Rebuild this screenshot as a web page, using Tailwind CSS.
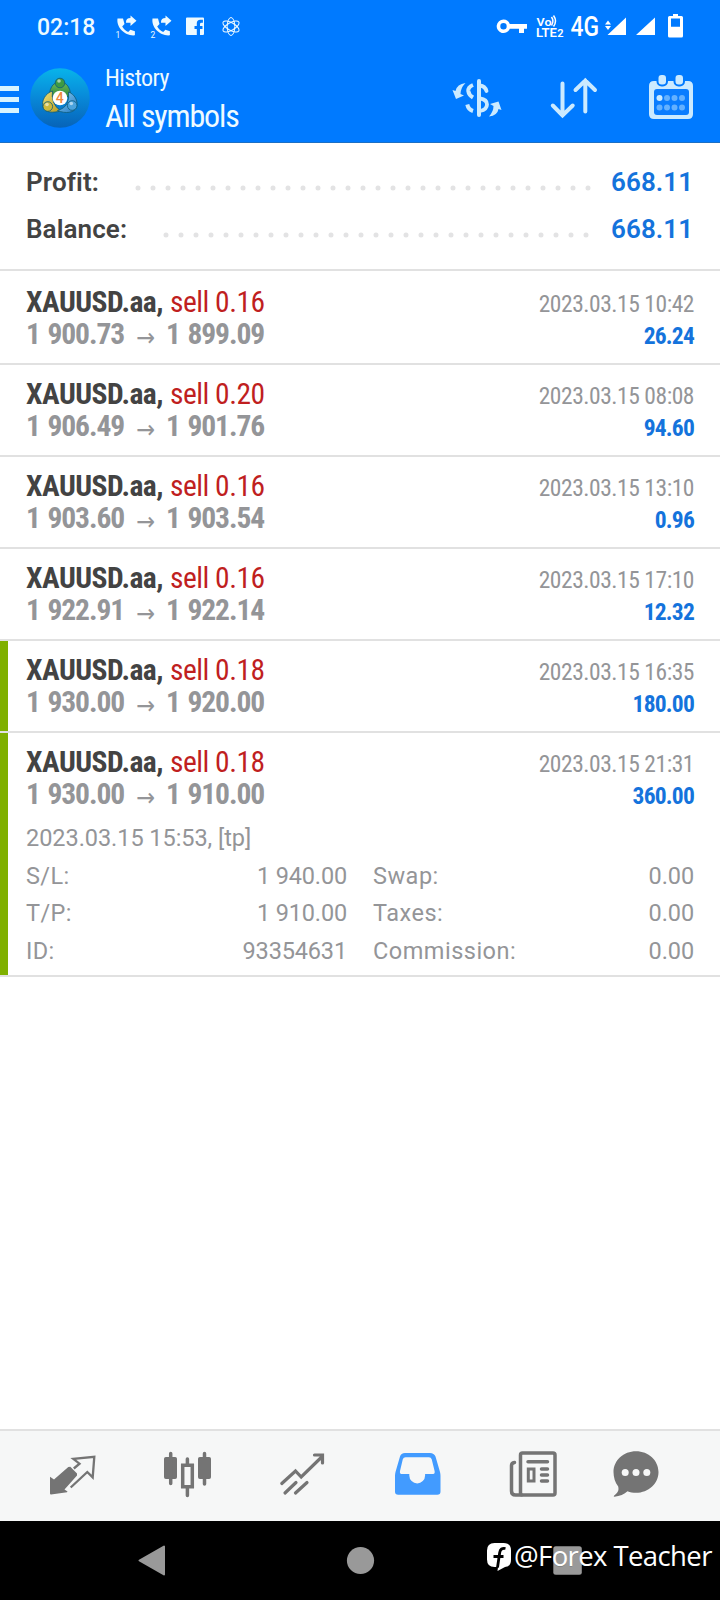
<!DOCTYPE html>
<html lang="en">
<head>
<meta charset="utf-8">
<title>History</title>
<script src="https://cdn.jsdelivr.net/npm/@tailwindcss/browser@4"></script>
</head>
<body class="flex h-[1600px] w-[720px] flex-col overflow-hidden bg-white font-['Roboto','Liberation_Sans',sans-serif] text-[#434343]">

<header class="h-[143px] shrink-0 border-b border-[#1c6fc4] bg-[#007aff] text-white">
  <!-- status bar -->
  <div class="flex h-[54px] items-center">
    <span class="ml-[37px] w-[79px] pt-[2px] text-[23px] leading-[54px] font-medium text-[#eefaff]">02:18</span>
    <svg class="h-[28px] w-[124px]" viewBox="116 13 124 28" fill="#eefaff">
      <g id="call"><path d="M117.500 18.500h5.500l1.500 5.500-2.300 2.400c1.500 2.700 3.300 4.400 6 5.600l2.200-2.200 4.500 1.500v4c-9.500 1-18.800-7.500-17.400-16.800z"/><path d="M126 22q0-4 4.500-4v-2.500l6 5.200-6 5.200v-3.200h-4.500z"/></g>
      <use href="#call" x="35"/>
      <text x="115.500" y="37.500" font-size="8.500">1</text><text x="150.500" y="37.500" font-size="8.500">2</text>
      <path fill-rule="evenodd" d="M187 17.500h16q1 0 1 1v15.500q0 1-1 1h-3v-6h2.500v-3h-2.500v-2q0-1.300 1.500-1.300h1.400v-2.900h-2.600q-3.500 0-3.500 3.500v2.700h-2.300v3h2.300v6h-9.800q-1 0-1-1v-15.500q0-1 1-1z"/>
      <g fill="none" stroke="#eefaff" stroke-width="1"><ellipse cx="231" cy="26.500" rx="3.800" ry="9"/><ellipse cx="231" cy="26.500" rx="3.800" ry="9" transform="rotate(60 231 26.500)"/><ellipse cx="231" cy="26.500" rx="3.800" ry="9" transform="rotate(120 231 26.500)"/></g>
    </svg>
    <svg class="ml-[255px] h-[40px] w-[190px]" viewBox="495 7 190 40" fill="#fff">
      <path fill-rule="evenodd" d="M503.500 19.500a6.800 6.800 0 0 1 6.300 4.500h17.200v4.800h-3v4.200h-5v-4.200h-9.200a6.800 6.800 0 1 1-6.300-9.300zm0 3.600a3.200 3.200 0 1 0 0 6.400 3.200 3.200 0 0 0 0-6.400z"/>
      <text x="536.500" y="26" font-size="11" font-weight="600" textLength="15" lengthAdjust="spacingAndGlyphs">Vo</text>
      <path d="M551.500 17q2.800 4 0 8.500M553.500 15.500q4 5.500 0 11" fill="none" stroke="#fff" stroke-width="1.500"/>
      <text x="536" y="37.300" font-size="12" font-weight="600" textLength="21" lengthAdjust="spacingAndGlyphs">LTE</text>
      <text x="557.200" y="37.300" font-size="11" font-weight="600">2</text>
      <text x="570.500" y="36" font-size="27.500" font-weight="500" textLength="28.500" lengthAdjust="spacingAndGlyphs">4G</text>
      <path d="M626 17.500V35h-18.500zM605 24.500l3-4 3 4zM605 26l3 4 3-4zM655 17.500V35h-19z"/>
      <path fill-rule="evenodd" d="M673 14h5v2h3.500q1.500 0 1.500 1.500v18.500q0 1.500-1.500 1.500h-12q-1.500 0-1.500-1.500v-18.500q0-1.500 1.500-1.500h3.500zM671 18.500v8.300h9v-8.300z"/>
    </svg>
  </div>
  <!-- app bar -->
  <div class="flex h-[88px] items-center">
    <div class="mt-[3px] flex w-[19px] flex-col gap-[6px]">
      <i class="h-[5px] bg-[#d8f4ff]"></i><i class="h-[5px] bg-[#d8f4ff]"></i><i class="h-[5px] bg-[#d8f4ff]"></i>
    </div>
    <svg class="ml-[11px] h-[60px] w-[60px]" viewBox="0 0 60 60">
      <defs>
        <linearGradient id="disc" x2="0" y2="1"><stop stop-color="#08b4ea"/><stop offset=".5" stop-color="#0888d8"/><stop offset="1" stop-color="#0763b8"/></linearGradient>
        <linearGradient id="gr" x2="0" y2="1"><stop stop-color="#6fbb58"/><stop offset="1" stop-color="#1f7d38"/></linearGradient>
        <linearGradient id="ye" x2="1" y2="1"><stop stop-color="#ece07c"/><stop offset="1" stop-color="#b99a1c"/></linearGradient>
        <linearGradient id="bl" x2="1" y2="1"><stop stop-color="#8fd0f2"/><stop offset="1" stop-color="#1f78c4"/></linearGradient>
      </defs>
      <circle cx="30" cy="30" r="29.800" fill="url(#disc)"/>
      <g stroke="#0c5a78" stroke-width=".8">
        <path d="M19.500 32c-1-11 3-18 10.500-18s11.500 7 10.500 18q-5-7-10.500-7t-10.500 7z" fill="url(#gr)"/>
        <path d="M22.500 23c-7 2-11.500 10-9.500 16 2 6 10 6 18 4q-6-4-7.500-9-2-6-1-11z" fill="url(#ye)"/>
        <path d="M38.500 24c6 2 10 9 8 15-2 6-11 7-19 3.500q7-2 9.500-7t1.500-11.500z" fill="url(#bl)"/>
        <circle cx="30" cy="15" r="4.800" fill="#3d9a44"/><circle cx="17.800" cy="38.500" r="4.800" fill="#cdb93c"/><circle cx="42.200" cy="37.500" r="4.800" fill="#4aa2dc"/>
      </g>
      <g fill="#fff" opacity=".55"><circle cx="29" cy="13" r="1.800"/><circle cx="17" cy="36.500" r="1.800"/><circle cx="41.300" cy="35.500" r="1.800"/></g>
      <circle cx="30" cy="30" r="7.300" fill="#fff"/>
      <text x="29.800" y="35" font-size="14" text-anchor="middle" fill="#f0883c" font-weight="500">4</text>
    </svg>
    <div class="ml-[15px] w-[340px] pt-[4px] text-[#eefaff] font-stretch-75%">
      <div class="h-[35px] text-[24px] leading-[30px] tracking-[-0.55px]">History</div>
      <div class="h-[40px] text-[32px] leading-[37px] tracking-[-1.15px]">All symbols</div>
    </div>
    <svg class="ml-[5px] h-[48px] w-[245px]" viewBox="450 73 245 48" fill="none" stroke="#cbeaff" stroke-width="4" stroke-linecap="round">
      <path d="M479 80v34"/>
      <path d="M480 84.500q5 .5 6.500 5.500M480 97.500q7 1 7 6t-7 6.500" stroke-width="3.800"/>
      <path d="M473 84q-5 2-4.700 6 .5 4 4.700 6.500M467.300 103.500q1 5 5.700 6.500" stroke-width="4" stroke-linecap="butt"/>
      <path d="M465.500 82q-8.500 1-10 8l-3-1 3.500 9 8-3.500-3.500-1.500q0-6 5-11zM489 115.500q8.500-1 9.500-7.500l3 1-3-8.500-8.500 2.500 3.500 2q0 5.500-4.500 10.500z" fill="#cbeaff" stroke="none"/>
      <path d="M562.500 82.500v31M552.800 104.500l9.700 10 10.200-10M585.300 110.500v-31M575.500 89l9.800-9.500 9.700 9.500"/>
      <path d="M654 80h34q5 0 5 5v28q0 5-5 5h-34q-5 0-5-5V85q0-5 5-5z" fill="#cbeaff" stroke="none"/>
      <path d="M657 88h29q3 0 3 3v20q0 3-3 3h-29q-3 0-3-3v-20q0-3 3-3z" fill="#0a7dff" stroke="none"/>
      <g fill="#cbeaff" stroke="#007aff" stroke-width="2"><rect x="657.500" y="73" width="9.500" height="11.500" rx="4"/><rect x="674.500" y="73" width="9.500" height="11.500" rx="4"/></g>
      <g stroke="#64b1ff" stroke-width="6"><path d="M659.500 97h.01" stroke="#cbeaff"/><path d="M667 97h.01M674.500 97h.01M682 97h.01M659.500 106.500h.01M667 106.500h.01M674.500 106.500h.01M682 106.500h.01"/></g>
    </svg>
  </div>
</header>

<!-- totals -->
<section class="h-[128px] shrink-0 border-b-2 border-[#e1e1e1] px-[26px] pt-[16px] text-[26px] leading-[47px] font-semibold">
  <div class="flex h-[47px] items-center">
    <span class="grow tracking-[0.1px]">Profit:</span>
    <svg class="mt-[11px] h-[6px] w-[456px]" viewBox="0 0 456 6"><path d="M3 3h450.500" stroke="#e3e3e4" stroke-width="5" stroke-linecap="round" stroke-dasharray="0 15"/></svg>
    <span class="ml-[20px] w-[83px] tracking-[0.1px] text-[#1473dc]">668.11</span>
  </div>
  <div class="flex h-[47px] items-center">
    <span class="grow tracking-[0.1px]">Balance:</span>
    <svg class="mr-[2px] mt-[11px] h-[6px] w-[426px]" viewBox="0 0 426 6"><path d="M3 3h420.500" stroke="#e3e3e4" stroke-width="5" stroke-linecap="round" stroke-dasharray="0 15"/></svg>
    <span class="ml-[20px] w-[83px] tracking-[0.1px] text-[#1473dc]">668.11</span>
  </div>
</section>

<main id="deals" class="grow pt-[2px]"></main>

<!-- tabs -->
<nav class="flex h-[92px] shrink-0 items-center gap-[67px] border-t-2 border-[#e1e1e1] bg-[#f6f7f7] pl-[48px] text-[#747474]">
  <svg class="h-[52px] w-[48px]" viewBox="48 1450 48 52"><path fill="currentColor" d="M50 1476.700l4 2.800 14.300-12.500 2-.2 6.700 6.700v2L64.500 1489.500l3 2-.5.700-16 2.300q-1 0-1-1z"/><path fill="none" stroke="currentColor" stroke-width="2.300" d="M73.800 1468.500l5.700-4.800-6.200-4.900 21-2-1.600 20.600-5.400-5.400-16.600 15.500"/></svg>
  <svg class="h-[52px] w-[48px]" viewBox="163 1450 48 52" fill="currentColor" stroke="currentColor" overflow="visible"><rect x="164.500" y="1457.500" width="12" height="21" rx="1"/><rect x="198.500" y="1457.500" width="12" height="21" rx="1"/><path fill="none" stroke-width="3.500" stroke-linecap="round" d="M170.700 1453.500v30M204.500 1453.500v30.500M187.400 1459v5M187.400 1488v7.500M182.700 1465.200h9.600v21.500h-9.600z"/></svg>
  <svg class="h-[52px] w-[48px]" viewBox="278 1450 48 52" fill="none" stroke="currentColor" stroke-width="3.200" stroke-linecap="round"><path d="M281.800 1483.500l13.700-12.500 5.700 6 21-20.500M314.500 1455h8v8M285 1493l11-10.500M295.500 1493l11.500-10.500"/></svg>
  <svg class="ml-[1px] h-[52px] w-[48px]" viewBox="394 1450 48 52"><path fill="#429bff" fill-rule="evenodd" d="M405 1453h25q4 0 5.500 3.500l4.500 15.500q.5 2 .5 4v15.500q0 3.200-3.200 3.200h-39.100q-3.200 0-3.200-3.200V1476q0-2 .5-4l4.500-15.500q1-3.500 5-3.500zM405.500 1457.200q-2 0-2.700 2l-2.800 11.800q-.5 3 1.500 3h7.800v1.500a7.900 7.900 0 0 0 15.800 0v-1.500h8q2 0 1.500-3l-2.900-11.800q-.7-2-2.700-2z"/></svg>
  <svg class="h-[52px] w-[48px]" viewBox="509 1450 48 52" fill="none" stroke="currentColor" stroke-width="3.500" stroke-linecap="round"><rect x="520.500" y="1453" width="34.500" height="42" rx="2"/><path d="M514.500 1462.500q-3 .5-3 3V1491q0 4 4 4h6M528 1461.700h19.500M541.500 1469h6M541.500 1475h6M541.500 1481h6"/><path stroke-linecap="butt" stroke-width="3" d="M528.300 1469h5.700v12h-5.700z"/></svg>
  <svg class="-ml-[12px] h-[52px] w-[48px]" viewBox="612 1450 48 52"><path fill="currentColor" d="M636 1451.200c12.500 0 22.500 9.200 22.500 20.800s-10 20.800-22.500 20.800c-3 0-6-.5-8.500-1.500-3 3-8 5-13 5.400-1 0-1-.7-.3-1.200 3.500-2.500 5-5 4-9C615 1482.500 613.500 1477 613.500 1472c0-11.600 10-20.800 22.500-20.800z"/><g fill="#f6f7f7"><circle cx="625.200" cy="1472.500" r="3.500"/><circle cx="636" cy="1472.500" r="3.500"/><circle cx="646.800" cy="1472.500" r="3.500"/></g></svg>
</nav>

<!-- system navigation with the author's signature over it -->
<footer class="relative h-[79px] shrink-0 bg-black">
  <svg class="h-[79px] w-[720px]" viewBox="0 1521 720 79" fill="#999"><path stroke="#999" stroke-width="2" stroke-linejoin="round" d="M139.500 1560.500l24.500-14v28z"/><circle cx="360.500" cy="1560.500" r="13.600"/><rect x="553.300" y="1546.300" width="28.500" height="28.500" rx="2.500"/></svg>
  <div class="absolute top-[12px] left-[486px] flex h-[45px] items-center text-white">
    <svg class="mt-[2px] h-[30px] w-[27px]" viewBox="486 1543 27 30"><path fill="#fff" d="M494.500 1544h9q7.500 0 7.500 7.500v9q0 7.500-6 7.500l-7.500 4 .5-4h-3.500q-7.500 0-7.500-7.500v-9q0-7.500 7.500-7.500z"/><path fill="none" stroke="#000" stroke-width="2.800" d="M505.500 1549.500q-5-1-5.800 4l-2.200 15M493.500 1557.500h10"/></svg>
    <span class="ml-px font-['Open_Sans','Noto_Sans',sans-serif] text-[27.500px] leading-[40px] tracking-[-0.6px] whitespace-nowrap text-shadow-2xs">@Forex Teacher</span>
  </div>
</footer>

<script>
const deals = [
  ['0.16', '1 900.73', '1 899.09', '10:42', '26.24'],
  ['0.20', '1 906.49', '1 901.76', '08:08', '94.60'],
  ['0.16', '1 903.60', '1 903.54', '13:10', '0.96'],
  ['0.16', '1 922.91', '1 922.14', '17:10', '12.32'],
  ['0.18', '1 930.00', '1 920.00', '16:35', '180.00', true],
  ['0.18', '1 930.00', '1 910.00', '21:31', '360.00', true],
];
const details = [
  ['S/L:', '1 940.00', 'Swap:', '0.00'],
  ['T/P:', '1 910.00', 'Taxes:', '0.00'],
  ['ID:', '93354631', 'Commission:', '0.00'],
];
const extra = `
  <div class="pt-[10px] text-[23.500px] leading-[37.500px] text-[#949598]">
    <div class="h-[38px] tracking-[-0.05px]">2023.03.15 15:53, [tp]</div>
    ${details.map(([a, b, c, d]) => `
    <div class="flex h-[37.500px]">
      <span class="w-[120px] tracking-[0.4px]">${a}</span><span class="w-[201px] text-right tracking-[-0.15px]">${b}</span>
      <span class="ml-[26px] grow tracking-[0.5px]">${c}</span><span class="tracking-[-0.1px]">${d}</span>
    </div>`).join('')}
  </div>`;
document.getElementById('deals').innerHTML = deals.map(([vol, from, to, time, profit, tp], i) => `
  <article class="flex border-b-2 border-[#e1e1e1]">
    <div class="${tp ? 'w-[7.500px] bg-[#7fb000]' : 'w-[7.500px]'}"></div>
    <div class="${i === 5 ? 'h-[242px]' : 'h-[90px]'} grow pr-[26px] pl-[18.500px] pt-[12.500px]">
      <div class="flex h-8 items-baseline text-[29.500px] leading-8 font-stretch-75%">
        <span class="w-[144px] font-bold tracking-[-0.5px]">XAUUSD.aa,</span>
        <span class="grow text-[#c01f1f] tracking-[-0.5px]">sell ${vol}</span>
        <span class="text-[23.500px] tracking-[-0.45px] text-[#949598]">2023.03.15 ${time}</span>
      </div>
      <div class="flex h-8 items-baseline text-[29.500px] leading-8 font-bold font-stretch-75% text-[#949598]">
        <span class="w-[110px] tracking-[-1.1px] [word-spacing:2px]">${from}</span>
        <span class="w-[30px] font-['DejaVu_Sans'] text-[25px] font-normal"><span class="inline-block translate-y-[2px]">→</span></span>
        <span class="grow tracking-[-1.1px] [word-spacing:2px]">${to}</span>
        <span class="text-[23.500px] tracking-[-0.8px] text-[#1473dc]">${profit}</span>
      </div>
      ${i === 5 ? extra : ''}
    </div>
  </article>`).join('');
</script>
</body>
</html>
